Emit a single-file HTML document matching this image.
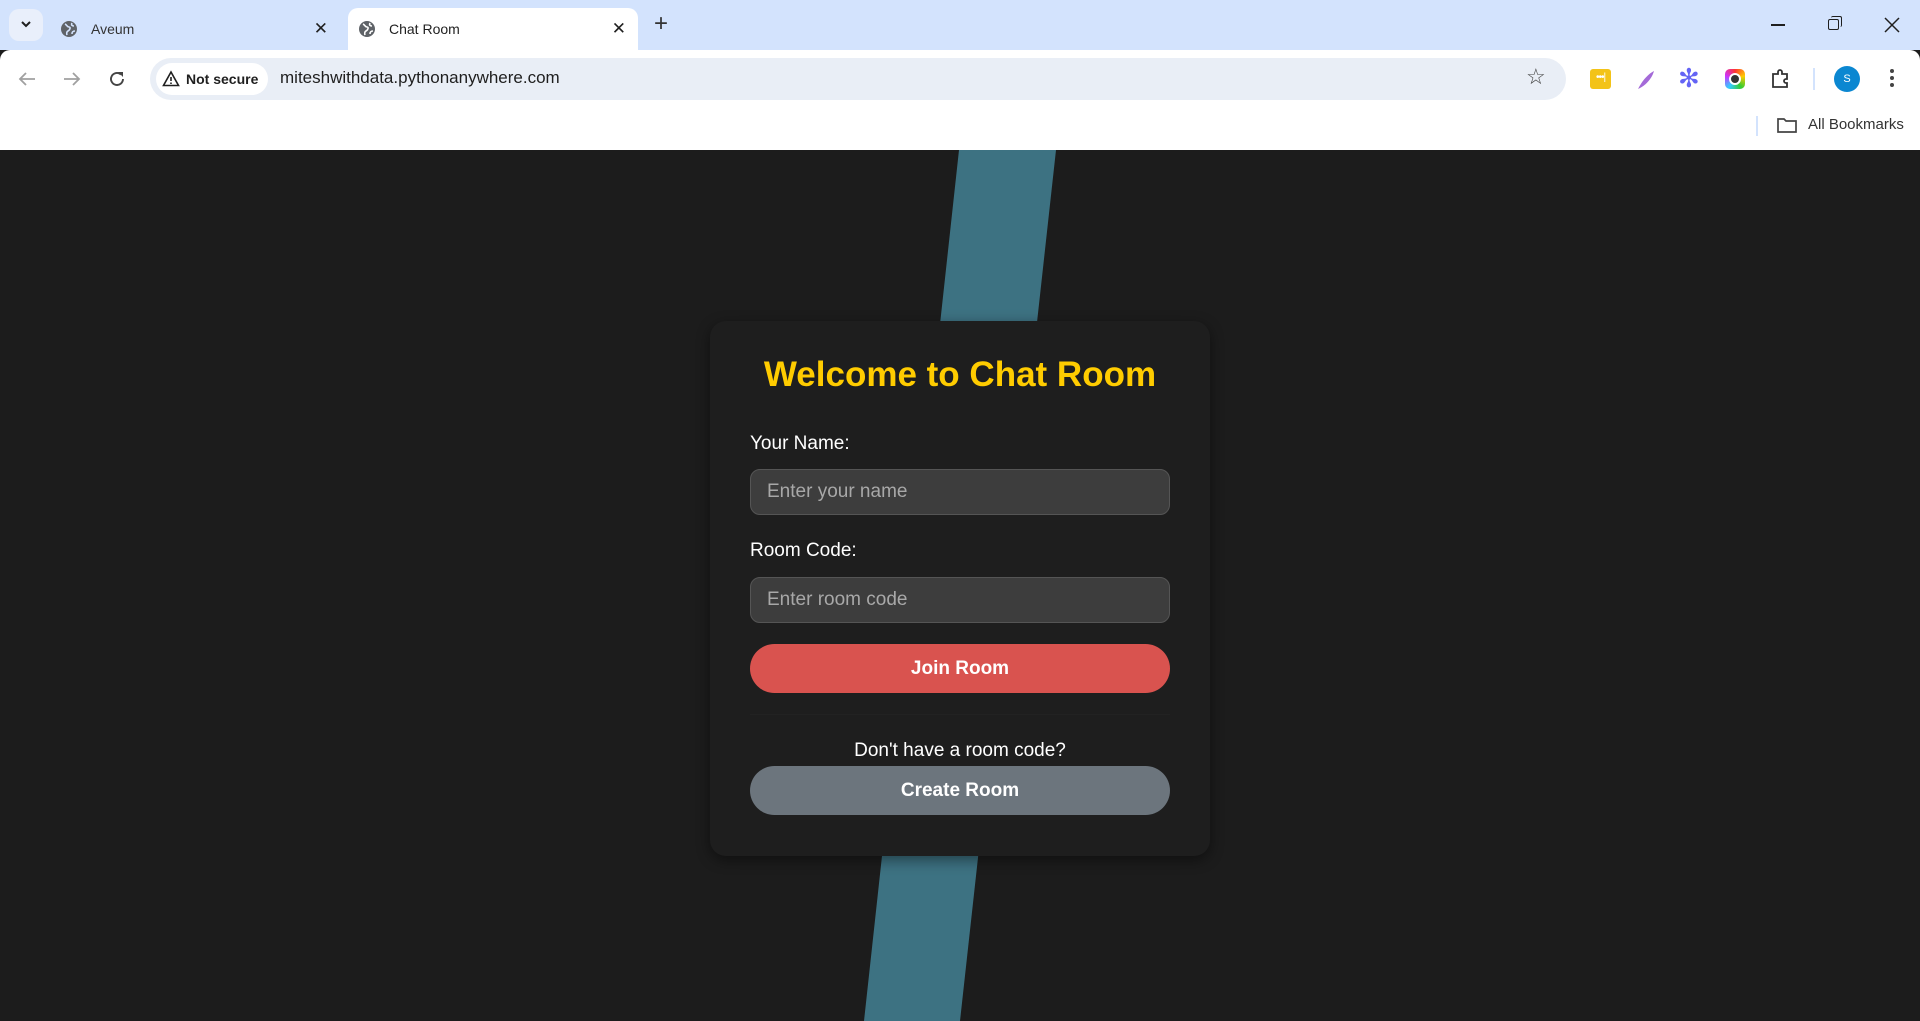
<!DOCTYPE html>
<html><head><meta charset="utf-8"><style>
*{box-sizing:border-box;margin:0;padding:0}
body{width:1920px;height:1021px;overflow:hidden;font-family:"Liberation Sans",Arial,sans-serif;background:#1c1c1c;position:relative}
.tabs{position:absolute;left:0;top:0;width:1920px;height:50px;background:#d3e3fd}
.toolbar{position:absolute;left:0;top:50px;width:1920px;height:100px;background:#fff;border-radius:10px 10px 0 0}
.tab{position:absolute;top:8px;height:42px;font-size:14px;color:#1f1f1f;display:flex;align-items:center}
.abs{position:absolute}
.content{position:absolute;left:0;top:150px;width:1920px;height:871px;background:#1c1c1c;overflow:hidden}
.card{position:absolute;left:710px;top:321px;width:500px;height:535px;background:#1e1e1e;border-radius:16px;box-shadow:0 4px 14px rgba(0,0,0,.45)}
h1{position:absolute;top:34px;width:100%;text-align:center;color:#ffcc00;font-size:35px;font-weight:bold}
label{position:absolute;left:40px;color:#fff;font-size:19px}
.inp{position:absolute;left:40px;width:420px;height:46px;background:#3d3d3d;border:1px solid #555;border-radius:10px;color:#a8a8a8;font-size:19px;padding-left:16px;line-height:44px}
.btn{position:absolute;left:40px;width:420px;height:49px;border-radius:25px;color:#fff;font-weight:bold;font-size:19px;text-align:center;line-height:49px}
</style></head><body>
<div class="tabs">
  <div class="abs" style="left:9px;top:9px;width:34px;height:32px;background:#e9effb;border-radius:10px"></div>
  <svg class="abs" style="left:19px;top:19px" width="14" height="12"><path d="M3 3l4 4 4-4" stroke="#1f1f1f" stroke-width="2" fill="none"/></svg>
  <div class="tab" style="left:50px;width:290px">
    <svg width="18" height="18" style="margin-left:10px" viewBox="0 0 18 18"><circle cx="9" cy="9" r="8" fill="#5f6368"/><path d="M5 4c2 1 2 3 4 3s1 3-1 4-1 4-1 4M12 3c-1 2 0 3 2 3M15 11c-2 0-3 1-3 3" stroke="#d3e3fd" stroke-width="1.6" fill="none"/></svg>
    <span style="margin-left:13px;color:#333">Aveum</span>
    <span style="position:absolute;right:12px;font-size:17px">✕</span>
  </div>
  <div class="tab" style="left:348px;width:290px;background:#fff;border-radius:10px 10px 0 0">
    <svg width="18" height="18" style="margin-left:10px" viewBox="0 0 18 18"><circle cx="9" cy="9" r="8" fill="#5f6368"/><path d="M5 4c2 1 2 3 4 3s1 3-1 4-1 4-1 4M12 3c-1 2 0 3 2 3M15 11c-2 0-3 1-3 3" stroke="#fff" stroke-width="1.6" fill="none"/></svg>
    <span style="margin-left:13px">Chat Room</span>
    <span style="position:absolute;right:12px;font-size:17px">✕</span>
  </div>
  <div class="abs" style="left:654px;top:10px;font-size:24px;color:#333">+</div>
  <div class="abs" style="left:1771px;top:24px;width:14px;height:1.5px;background:#1f1f1f"></div>
  <div class="abs" style="left:1828px;top:19px;width:11px;height:11px;border:1.5px solid #1f1f1f;border-radius:2px"></div>
  <div class="abs" style="left:1831px;top:16px;width:11px;height:11px;border-top:1.5px solid #1f1f1f;border-right:1.5px solid #1f1f1f;border-radius:2px"></div>
  <svg class="abs" style="left:1884px;top:17px" width="16" height="16"><path d="M1 1l14 14M15 1L1 15" stroke="#1f1f1f" stroke-width="1.5"/></svg>
</div>
<div class="toolbar">
  <svg class="abs" style="left:18px;top:21px" width="18" height="16"><path d="M17 8H2M8 2L2 8l6 6" stroke="#a0a0a0" stroke-width="1.8" fill="none"/></svg>
  <svg class="abs" style="left:63px;top:21px" width="18" height="16"><path d="M1 8h15M10 2l6 6-6 6" stroke="#a0a0a0" stroke-width="1.8" fill="none"/></svg>
  <svg class="abs" style="left:108px;top:20px" width="18" height="18"><path d="M15 9a6 6 0 1 1-2-4.5" stroke="#444" stroke-width="1.9" fill="none"/><path d="M10 2h5v5z" fill="#444"/></svg>
  <div class="abs" style="left:150px;top:8px;width:1416px;height:42px;background:#e9eef6;border-radius:21px"></div>
  <div class="abs" style="left:156px;top:13px;width:112px;height:32px;background:#fff;border-radius:16px;font-size:14px;font-weight:bold;color:#1f1f1f;line-height:32px;padding-left:30px">Not secure</div>
  <svg class="abs" style="left:162px;top:20px" width="18" height="17"><path d="M9 2L1.5 15.5h15z" stroke="#1f1f1f" stroke-width="1.6" fill="none"/><path d="M9 7v4M9 12.5v1.5" stroke="#1f1f1f" stroke-width="1.6"/></svg>
  <div class="abs" style="left:280px;top:18px;font-size:17px;color:#1f1f1f">miteshwithdata.pythonanywhere.com</div>
  <div class="abs" style="left:1526px;top:14px;font-size:22px;color:#444">☆</div>
  <div class="abs" style="left:1590px;top:19px;width:21px;height:20px;background:#f3c318;border-radius:3px;color:#fff;font-size:10px;text-align:center;line-height:18px;letter-spacing:-1px">•••|</div>
  <svg class="abs" style="left:1636px;top:19px" width="20" height="22"><path d="M2 20C6 12 12 5 18 2 16 9 11 15 4 19z" fill="#a46ad8"/></svg>
  <div class="abs" style="left:1678px;top:13px;font-size:26px;color:#6464f5;line-height:30px">✻</div>
  <div class="abs" style="left:1725px;top:19px;width:20px;height:20px;border-radius:5px;background:conic-gradient(#f33,#fc0,#3c3,#3cf,#c3f,#f33)"></div>
  <div class="abs" style="left:1729px;top:23px;width:12px;height:12px;border-radius:50%;background:#333;border:2px solid #fff"></div>
  <svg class="abs" style="left:1770px;top:18px" width="22" height="22"><path d="M3 6h5V4a2 2 0 0 1 4 0v2h5v5h-1a2 2 0 0 0 0 4h1v4H3z" stroke="#333" stroke-width="1.8" fill="none"/></svg>
  <div class="abs" style="left:1813px;top:18px;width:2px;height:22px;background:#d3e3fd"></div>
  <div class="abs" style="left:1834px;top:16px;width:26px;height:26px;border-radius:50%;background:#0b87d1;color:#fff;font-size:11px;text-align:center;line-height:26px">S</div>
  <div class="abs" style="left:1890px;top:19px;width:4px;height:4px;border-radius:50%;background:#444;box-shadow:0 7px 0 #444,0 14px 0 #444"></div>
  <div class="abs" style="left:1756px;top:66px;width:2px;height:20px;background:#d3e3fd"></div>
  <svg class="abs" style="left:1776px;top:66px" width="22" height="18"><path d="M2 3h6l2 2h10v11H2z" stroke="#444" stroke-width="1.7" fill="none"/></svg>
  <div class="abs" style="left:1808px;top:66px;font-size:15px;color:#333">All Bookmarks</div>
</div>
<div class="content">
  <svg class="abs" style="left:0;top:0" width="1920" height="871"><polygon points="959,0 1056,0 960,871 864,871" fill="#3d7282"/></svg>
</div>
<div class="card">
  <h1>Welcome to Chat Room</h1>
  <label style="top:112px">Your Name:</label>
  <div class="inp" style="top:148px">Enter your name</div>
  <label style="top:219px">Room Code:</label>
  <div class="inp" style="top:256px">Enter room code</div>
  <div class="btn" style="top:323px;background:#d9534f">Join Room</div>
  <div class="abs" style="left:40px;top:393px;width:420px;height:1px;background:#222"></div>
  <div class="abs" style="top:419px;width:100%;text-align:center;color:#fff;font-size:19px">Don't have a room code?</div>
  <div class="btn" style="top:445px;background:#6c757d">Create Room</div>
</div>
</body></html>
